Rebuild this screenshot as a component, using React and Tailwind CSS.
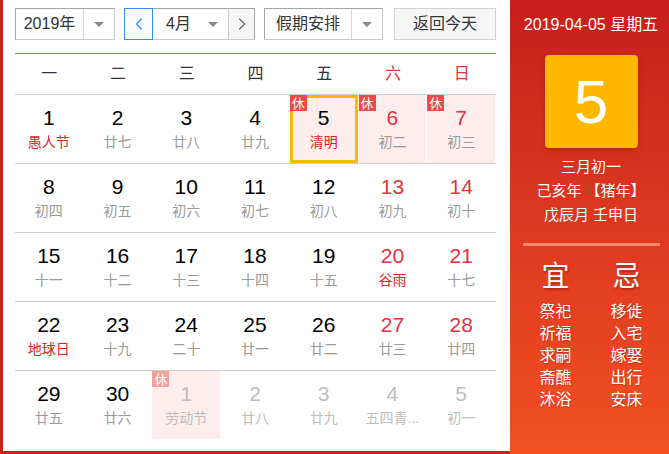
import React from 'react';
import { ChevronLeft, ChevronRight } from 'lucide-react';

const weekdays = ['一', '二', '三', '四', '五', '六', '日'];

// t: lunar/festival text, f: festival, h: holiday badge, o: other month, today
const rows = [
  [
    { d: 1, t: '愚人节', f: true },
    { d: 2, t: '廿七' },
    { d: 3, t: '廿八' },
    { d: 4, t: '廿九' },
    { d: 5, t: '清明', f: true, h: true, today: true },
    { d: 6, t: '初二', h: true },
    { d: 7, t: '初三', h: true },
  ],
  [
    { d: 8, t: '初四' },
    { d: 9, t: '初五' },
    { d: 10, t: '初六' },
    { d: 11, t: '初七' },
    { d: 12, t: '初八' },
    { d: 13, t: '初九' },
    { d: 14, t: '初十' },
  ],
  [
    { d: 15, t: '十一' },
    { d: 16, t: '十二' },
    { d: 17, t: '十三' },
    { d: 18, t: '十四' },
    { d: 19, t: '十五' },
    { d: 20, t: '谷雨', f: true },
    { d: 21, t: '十七' },
  ],
  [
    { d: 22, t: '地球日', f: true },
    { d: 23, t: '十九' },
    { d: 24, t: '二十' },
    { d: 25, t: '廿一' },
    { d: 26, t: '廿二' },
    { d: 27, t: '廿三' },
    { d: 28, t: '廿四' },
  ],
  [
    { d: 29, t: '廿五' },
    { d: 30, t: '廿六' },
    { d: 1, t: '劳动节', h: true, o: true },
    { d: 2, t: '廿八', o: true },
    { d: 3, t: '廿九', o: true },
    { d: 4, t: '五四青...', o: true },
    { d: 5, t: '初一', o: true },
  ],
];

const yi = ['祭祀', '祈福', '求嗣', '斋醮', '沐浴'];
const ji = ['移徙', '入宅', '嫁娶', '出行', '安床'];

function Caret() {
  return (
    <span className="w-0 h-0 border-l-[5px] border-r-[5px] border-t-[5px] border-l-transparent border-r-transparent border-t-[#8a8a8a]" />
  );
}

function Cell({ c, col }) {
  const weekend = col >= 5;
  let numColor = weekend ? 'text-[#e5323b]' : 'text-black';
  let subColor = c.f ? 'text-[#e02424]' : 'text-[#9a9a9a]';
  if (c.o) {
    numColor = 'text-[#bdbdbd]';
    subColor = 'text-[#bdbdbd]';
  }
  return (
    <div className="relative h-[68px]">
      <div
        className={`h-full mr-px ${c.h ? 'bg-[#fdeded]' : ''} ${
          c.today ? 'border-[3px] border-[#fdb900] mr-0 mb-px' : 'mb-px'
        }`}
      >
        <div className={`flex flex-col items-center ${c.today ? 'pt-[9px]' : 'pt-[12px]'}`}>
          <div className={`text-[21px] leading-[22px] ${numColor}`}>{c.d}</div>
          <div className={`mt-[4px] w-full text-center text-[14px] leading-[18px] whitespace-nowrap ${subColor}`}>
            {c.t}
          </div>
        </div>
      </div>
      {c.h && (
        <span
          className={`absolute top-0 left-0 w-[17px] h-[16px] flex items-center justify-center text-white text-[13px] leading-none ${
            c.o ? 'bg-[#f5a19b]' : 'bg-[#f04848]'
          }`}
        >
          休
        </span>
      )}
    </div>
  );
}

export default function App() {
  return (
    <div className="w-[669px] h-[454px] flex font-['Liberation_Sans','Noto_Sans_CJK_SC',sans-serif] bg-white overflow-hidden">
      <div className="w-[510px] h-full border-l-[3px] border-b-[3px] border-[#d11f1b] pl-[12px]">
        {/* toolbar */}
        <div className="mt-[8px] h-[32px] flex text-[#333]">
          <div className="w-[100px] h-full flex border border-[#cacaca] border-t-[#a3a3a3] border-l-[#a3a3a3]">
            <div className="flex-1 flex items-center justify-center text-[16px]">2019年</div>
            <div className="w-[31px] flex items-center justify-center border-l border-[#d6d6d6]">
              <Caret />
            </div>
          </div>

          <div className="ml-[9px] w-[131px] h-full flex">
            <div className="w-[29px] flex items-center justify-center border border-[#3c8cf3] bg-[#f8fbff] text-[#3c8cf3]">
              <ChevronLeft size={20} strokeWidth={1.4} />
            </div>
            <div className="flex-1 flex items-center border-y border-[#cacaca] border-t-[#a3a3a3] pl-[13px] pr-[10px]">
              <span className="text-[16px] flex-1">4月</span>
              <Caret />
            </div>
            <div className="w-[27px] flex items-center justify-center border border-[#cacaca] border-r-[#a3a3a3] border-t-[#a3a3a3] bg-[#f6f6f6] text-[#666]">
              <ChevronRight size={20} strokeWidth={1.4} />
            </div>
          </div>

          <div className="ml-[9px] w-[119px] h-full flex border border-[#cacaca] border-t-[#a3a3a3] border-l-[#a3a3a3]">
            <div className="flex-1 flex items-center justify-center text-[16px]">假期安排</div>
            <div className="w-[31px] flex items-center justify-center border-l border-[#d6d6d6]">
              <Caret />
            </div>
          </div>

          <button className="ml-[11px] w-[102px] h-full flex items-center justify-center border border-[#d2d2d2] bg-[#f6f6f6] text-[16px] text-[#333]">
            返回今天
          </button>
        </div>

        {/* calendar */}
        <div className="mt-[13px] w-[481px] border-t border-[#e4594c]">
          <div className="grid grid-cols-7 h-[41px] border-b border-[#cfcfcf]">
            {weekdays.map((w, i) => (
              <div
                key={w}
                className={`flex items-center justify-center text-[16px] ${i >= 5 ? 'text-[#e5323b]' : 'text-[#333]'}`}
              >
                {w}
              </div>
            ))}
          </div>
          {rows.map((r, ri) => (
            <div
              key={ri}
              className={`grid grid-cols-7 ${ri < rows.length - 1 ? 'border-b border-[#cfcfcf]' : ''}`}
            >
              {r.map((c, ci) => (
                <Cell key={ci} c={c} col={ci} />
              ))}
            </div>
          ))}
        </div>
      </div>

      {/* side panel */}
      <div className="w-[159px] h-full pl-[3px] bg-linear-to-b from-[#c81d1b] to-[#f34f23] text-white flex flex-col items-center">
        <div className="mt-[15px] text-[16px] leading-[20px]">2019-04-05 星期五</div>
        <div className="mt-[20px] w-[93px] h-[93px] rounded-[4px] bg-[#feb800] shadow-[0_2px_4px_rgba(120,30,0,0.35)] flex items-center justify-center text-[62px] leading-none">
          5
        </div>
        <div className="mt-[7px] flex flex-col items-center text-[15px] leading-[24px]">
          <div>三月初一</div>
          <div>己亥年 【猪年】</div>
          <div>戊辰月 壬申日</div>
        </div>
        <div className="mt-[16px] w-[137px] h-[3px] bg-[#f08a72]" />
        <div className="mt-[13px] w-[142px] grid grid-cols-2">
          {[['宜', yi], ['忌', ji]].map(([title, list]) => (
            <div key={title} className="flex flex-col items-center">
              <div className="text-[28px] leading-[36px] [text-shadow:1px_2px_2px_rgba(90,0,0,0.35)]">{title}</div>
              <div className="mt-[6px] flex flex-col items-center text-[16px] leading-[22px] [text-shadow:1px_1px_1px_rgba(90,0,0,0.25)]">
                {list.map((x) => (
                  <div key={x}>{x}</div>
                ))}
              </div>
            </div>
          ))}
        </div>
      </div>
    </div>
  );
}
